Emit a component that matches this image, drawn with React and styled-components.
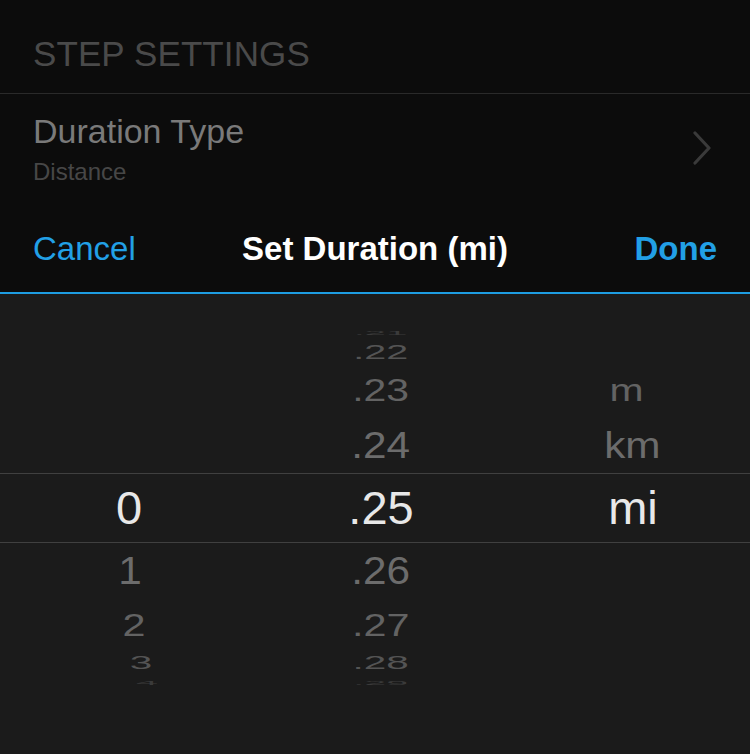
import React from "react";
import styled, { createGlobalStyle } from "styled-components";

const Global = createGlobalStyle`
  html, body { margin: 0; padding: 0; background: #1b1b1b; }
  body { font-family: "Liberation Sans", Arial, sans-serif; }
`;

const Screen = styled.div`
  width: 750px;
  height: 754px;
  display: flex;
  flex-direction: column;
  background: #0c0c0c;
  overflow: hidden;
`;

const SectionHeader = styled.div`
  box-sizing: border-box;
  height: 94px;
  padding: 34px 33px 0;
  font-size: 35px;
  line-height: 40px;
  letter-spacing: 0.1px;
  color: #4a4a4a;
  border-bottom: 1px solid #2a2a2a;
`;

const SettingRow = styled.div`
  box-sizing: border-box;
  height: 106px;
  padding: 17px 38px 0 33px;
  display: flex;
  align-items: flex-start;
  justify-content: space-between;
`;

const SettingText = styled.div`
  display: flex;
  flex-direction: column;
  gap: 7px;
`;

const SettingTitle = styled.div`
  font-size: 34px;
  line-height: 40px;
  color: #7a7a7a;
`;

const SettingValue = styled.div`
  font-size: 24px;
  line-height: 28px;
  color: #474747;
`;

const Chevron = styled.svg`
  width: 20px;
  height: 34px;
  margin-top: 20px;
`;

const Toolbar = styled.div`
  box-sizing: border-box;
  height: 94px;
  padding: 6px 33px 0;
  display: grid;
  grid-template-columns: 1fr auto 1fr;
  align-items: center;
  border-bottom: 2px solid #1e9de2;
`;

const ToolButton = styled.div`
  font-size: 33px;
  line-height: 40px;
  color: #22a0e6;
  font-weight: ${(p) => (p.$bold ? 700 : 400)};
  justify-self: ${(p) => (p.$end ? "end" : "start")};
`;

const ToolTitle = styled.div`
  font-size: 33px;
  line-height: 40px;
  font-weight: 700;
  color: #ffffff;
`;

const Picker = styled.div`
  flex: 1;
  background: #1b1b1b;
  padding-top: 33px;
  display: flex;
  flex-direction: column;
`;

const PickerRow = styled.div`
  box-sizing: border-box;
  flex: none;
  height: ${(p) => p.$h}px;
  display: grid;
  grid-template-columns: repeat(3, 252px);
  grid-template-rows: minmax(0, 1fr);
  padding-left: 3px;
  ${(p) =>
    p.$selected &&
    `
    border-top: 1px solid #404040;
    border-bottom: 1px solid #404040;
  `}
`;

const Cell = styled.div`
  min-height: 0;
  display: flex;
  justify-content: center;
  align-items: center;
  overflow: visible;
`;

const Value = styled.span`
  display: inline-block;
  font-size: 47px;
  line-height: 54px;
  color: ${(p) => p.$color};
  transform: translateX(${(p) => p.$dx || 0}px) scale(${(p) => p.$sx}, ${(p) => p.$sy});
  transform-origin: center center;
  white-space: nowrap;
`;

const rows = [
  { h: 12, sx: 0.82, sy: 0.1, color: "#3a3a3a", cells: [null, ".21", null] },
  { h: 26, sx: 0.84, sy: 0.42, color: "#545454", cells: [null, ".22", null] },
  { h: 52, sx: 0.87, sy: 0.65, color: "#636363", cells: [null, ".23", "m"], dx: [0, 0, -6] },
  { h: 56, sx: 0.9, sy: 0.8, color: "#6c6c6c", cells: [null, ".24", "km"], dx: [0, 0, -1] },
  { h: 70, sx: 1, sy: 1, color: "#e8e8e8", cells: ["0", ".25", "mi"], selected: true },
  { h: 56, sx: 0.9, sy: 0.82, color: "#6c6c6c", cells: ["1", ".26", null], dx: [1, 0, 0] },
  { h: 52, sx: 0.88, sy: 0.67, color: "#636363", cells: ["2", ".27", null], dx: [5, 0, 0] },
  { h: 24, sx: 0.86, sy: 0.4, color: "#545454", cells: ["3", ".28", null], dx: [12, 0, 0] },
  { h: 16, sx: 0.84, sy: 0.1, color: "#3a3a3a", cells: ["4", ".29", null], dx: [18, 0, 0] },
];

export default function App() {
  return (
    <>
      <Global />
      <Screen>
        <SectionHeader>STEP SETTINGS</SectionHeader>
        <SettingRow>
          <SettingText>
            <SettingTitle>Duration Type</SettingTitle>
            <SettingValue>Distance</SettingValue>
          </SettingText>
          <Chevron viewBox="0 0 20 34">
            <polyline
              points="3,2 17,17 3,32"
              fill="none"
              stroke="#3a3a3a"
              strokeWidth="3.2"
              strokeLinecap="round"
              strokeLinejoin="round"
            />
          </Chevron>
        </SettingRow>
        <Toolbar>
          <ToolButton>Cancel</ToolButton>
          <ToolTitle>Set Duration (mi)</ToolTitle>
          <ToolButton $bold $end>
            Done
          </ToolButton>
        </Toolbar>
        <Picker>
          {rows.map((r, i) => (
            <PickerRow key={i} $h={r.h} $selected={r.selected}>
              {r.cells.map((c, j) => (
                <Cell key={j}>
                  {c && (
                    <Value
                      $color={r.color}
                      $sx={r.sx}
                      $sy={r.sy}
                      $dx={r.dx ? r.dx[j] : 0}
                    >
                      {c}
                    </Value>
                  )}
                </Cell>
              ))}
            </PickerRow>
          ))}
        </Picker>
      </Screen>
    </>
  );
}
